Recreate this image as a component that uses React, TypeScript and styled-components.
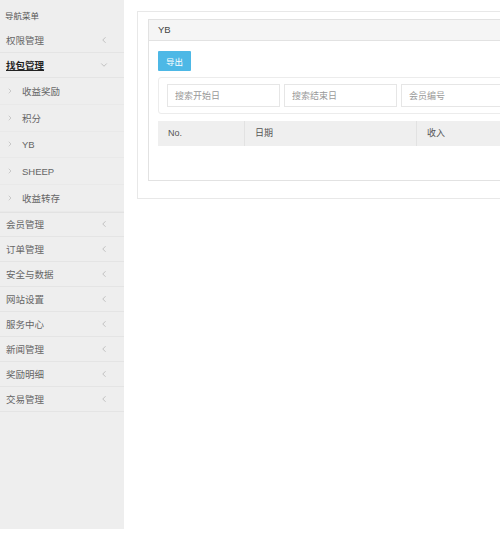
import styled, { createGlobalStyle } from "styled-components";
import { ChevronLeft, ChevronDown, ChevronRight } from "lucide-react";

const menu = ["会员管理", "订单管理", "安全与数据", "网站设置", "服务中心", "新闻管理", "奖励明细", "交易管理"];
const subMenu = ["收益奖励", "积分", "YB", "SHEEP", "收益转存"];
const columns = [
  { label: "No.", width: 86 },
  { label: "日期", width: 172 },
  { label: "收入", width: 160 },
  { label: "", width: 160 },
];

const App: React.FC = () => {
  return (
    <>
      <GlobalStyle />
      <StyledLayout>
        <StyledSidebar>
          <StyledSideTitle>导航菜单</StyledSideTitle>
          <StyledNavRow>
            <span>权限管理</span>
            <ChevronLeft size={10} strokeWidth={1.3} />
          </StyledNavRow>
          <StyledNavRow $active>
            <span>找包管理</span>
            <ChevronDown size={10} strokeWidth={1.3} />
          </StyledNavRow>
          {subMenu.map((item) => (
            <StyledSubRow key={item}>
              <ChevronRight size={8} strokeWidth={1.3} />
              <span>{item}</span>
            </StyledSubRow>
          ))}
          {menu.map((item, i) => (
            <StyledNavRow key={item} $first={i === 0}>
              <span>{item}</span>
              <ChevronLeft size={10} strokeWidth={1.3} />
            </StyledNavRow>
          ))}
        </StyledSidebar>
        <StyledMain>
          <StyledOuterPanel>
            <StyledPanel>
              <StyledPanelHeader>YB</StyledPanelHeader>
              <StyledPanelBody>
                <StyledExportButton>导出</StyledExportButton>
                <StyledSearchBox>
                  <StyledInput placeholder="搜索开始日" />
                  <StyledInput placeholder="搜索结束日" />
                  <StyledInput placeholder="会员编号" />
                </StyledSearchBox>
                <StyledTableHead>
                  {columns.map((col, i) => (
                    <StyledHeadCell key={i} style={{ width: col.width }}>
                      {col.label}
                    </StyledHeadCell>
                  ))}
                </StyledTableHead>
              </StyledPanelBody>
            </StyledPanel>
          </StyledOuterPanel>
        </StyledMain>
      </StyledLayout>
    </>
  );
};

const GlobalStyle = createGlobalStyle`
  html, body {
    margin: 0;
    padding: 0;
    overflow: hidden;
    background: #fff;
    font-family: "Liberation Sans", "Noto Sans CJK SC", sans-serif;
    color: #555;
  }
  * { box-sizing: border-box; }
`;

const StyledLayout = styled.div`
  display: flex;
  align-items: flex-start;
  width: 760px;
`;

const StyledSidebar = styled.aside`
  width: 124px;
  height: 529px;
  flex-shrink: 0;
  background: #eeeeee;
  font-size: 9.5px;
`;

const StyledSideTitle = styled.div`
  height: 28px;
  padding: 10px 0 0 5px;
  font-size: 8.5px;
  line-height: 12px;
  color: #555;
`;

const StyledNavRow = styled.div<{ $active?: boolean; $first?: boolean }>`
  height: 25px;
  display: flex;
  align-items: center;
  justify-content: space-between;
  padding: 0 15px 0 6px;
  border-top: ${(p) => (p.$first ? "1px solid #e2e2e2" : "none")};
  border-bottom: 1px solid #e4e4e4;
  color: ${(p) => (p.$active ? "#222" : "#666")};
  > span {
    font-weight: ${(p) => (p.$active ? 700 : 400)};
    text-decoration: ${(p) => (p.$active ? "underline" : "none")};
  }
  > svg {
    color: #999;
  }
`;

const StyledSubRow = styled.div`
  height: 26.8px;
  display: flex;
  align-items: center;
  gap: 8px;
  padding-left: 6px;
  color: #666;
  border-bottom: 1px solid #e9e9e9;
  &:last-of-type {
    border-bottom: none;
  }
  > svg {
    color: #999;
  }
`;

const StyledMain = styled.main`
  flex: 1;
  padding: 11px 0 0 13px;
`;

const StyledOuterPanel = styled.div`
  border: 1px solid #e8e8e8;
  padding: 7px 0 17px 10px;
`;

const StyledPanel = styled.section`
  border: 1px solid #e2e2e2;
  background: #fff;
`;

const StyledPanelHeader = styled.div`
  height: 21px;
  padding-left: 9px;
  background: #f5f5f5;
  border-bottom: 1px solid #e2e2e2;
  font-size: 9.5px;
  line-height: 20px;
  color: #444;
`;

const StyledPanelBody = styled.div`
  padding: 10px 0 34px 9px;
`;

const StyledExportButton = styled.button`
  display: block;
  width: 33px;
  height: 20px;
  padding: 0;
  border: none;
  border-radius: 1px;
  background: #4db8e6;
  color: #fff;
  font-family: inherit;
  font-size: 8.5px;
`;

const StyledSearchBox = styled.div`
  display: flex;
  gap: 4px;
  margin-top: 6px;
  padding: 6px 8px;
  border: 1px solid #ececec;
  border-radius: 3px;
`;

const StyledInput = styled.input`
  width: 113px;
  height: 23px;
  padding: 0 7px;
  border: 1px solid #e6e6e6;
  font-family: inherit;
  font-size: 9px;
  color: #555;
  outline: none;
  &::placeholder {
    color: #999;
  }
`;

const StyledTableHead = styled.div`
  display: flex;
  margin-top: 7px;
  height: 25px;
  background: #efefef;
`;

const StyledHeadCell = styled.div`
  flex-shrink: 0;
  padding-left: 10px;
  font-size: 9px;
  line-height: 25px;
  color: #555;
  & + & {
    border-left: 1px solid #e2e2e2;
  }
`;

export default App;
